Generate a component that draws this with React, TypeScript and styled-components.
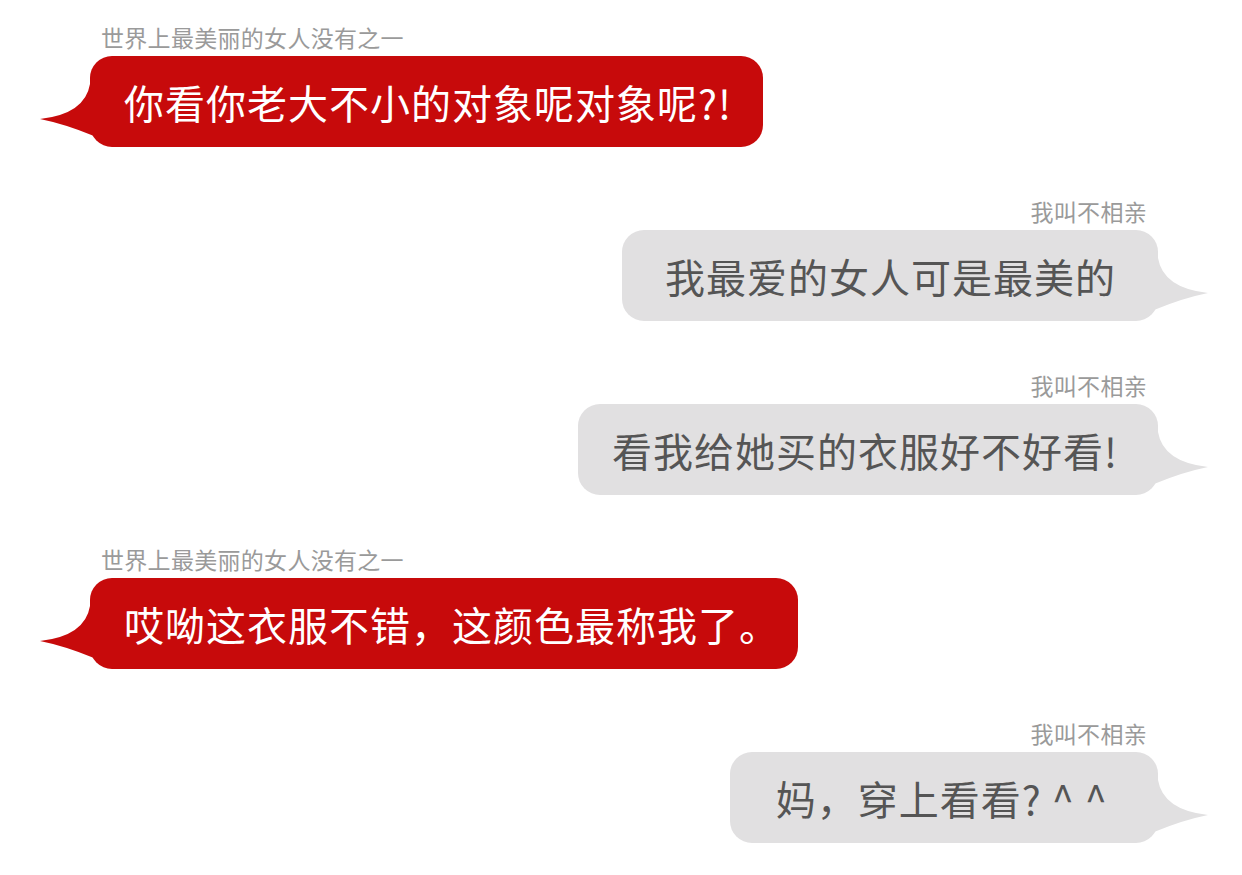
import styled, { createGlobalStyle } from "styled-components";

type Side = "left" | "right";

const messages: { side: Side; name: string; text: string; pad: [number, number] }[] = [
  { side: "left", name: "世界上最美丽的女人没有之一", text: "你看你老大不小的对象呢对象呢?!", pad: [34, 31] },
  { side: "right", name: "我叫不相亲", text: "我最爱的女人可是最美的", pad: [43, 42] },
  { side: "right", name: "我叫不相亲", text: "看我给她买的衣服好不好看!", pad: [34, 40] },
  { side: "left", name: "世界上最美丽的女人没有之一", text: "哎呦这衣服不错，这颜色最称我了。", pad: [34, 18] },
  { side: "right", name: "我叫不相亲", text: "妈，穿上看看? ^ ^", pad: [46, 50] },
];

export default function App() {
  return (
    <>
      <GlobalStyle />
      <Chat>
        {messages.map((m, i) => (
          <Group key={i} side={m.side}>
            <Name>{m.name}</Name>
            <Bubble side={m.side} padL={m.pad[0]} padR={m.pad[1]}>
              <Tail side={m.side} viewBox="0 0 60 60" width="60" height="60">
                <path d="M 50 0 Q 45 30 0 35 Q 25 40 54 52 L 60 52 L 60 0 Z" />
              </Tail>
              {m.text}
            </Bubble>
          </Group>
        ))}
      </Chat>
    </>
  );
}

const GlobalStyle = createGlobalStyle`
    body {
        margin: 0;
        background: #fff;
        font-family: "Noto Sans CJK SC", "Noto Sans", sans-serif;
    }
`;

const Chat = styled.div`
    display: flex;
    flex-direction: column;
    gap: 51px;
    padding: 24px 84px 0 90px;
`;

const Group = styled.div<{ side: Side }>`
    display: flex;
    flex-direction: column;
    align-items: ${(p) => (p.side === "left" ? "flex-start" : "flex-end")};
    gap: 6px;
`;

const Name = styled.div`
    font-size: 23px;
    letter-spacing: 0.3px;
    line-height: 26px;
    color: #9a9a9a;
    padding: 0 11px;
`;

const Bubble = styled.div<{ side: Side; padL: number; padR: number }>`
    position: relative;
    height: 91px;
    display: flex;
    align-items: center;
    padding: 0 ${(p) => p.padR}px 0 ${(p) => p.padL}px;
    border-radius: 22px;
    font-size: 40px;
    letter-spacing: 1px;
    white-space: nowrap;
    background: ${(p) => (p.side === "left" ? "#c70a0b" : "#e1e0e1")};
    color: ${(p) => (p.side === "left" ? "#fff" : "#555")};
    fill: ${(p) => (p.side === "left" ? "#c70a0b" : "#e1e0e1")};
`;

const Tail = styled.svg<{ side: Side }>`
    position: absolute;
    top: 28px;
    ${(p) => (p.side === "left" ? "left: -50px;" : "right: -50px; transform: scaleX(-1);")}
`;
